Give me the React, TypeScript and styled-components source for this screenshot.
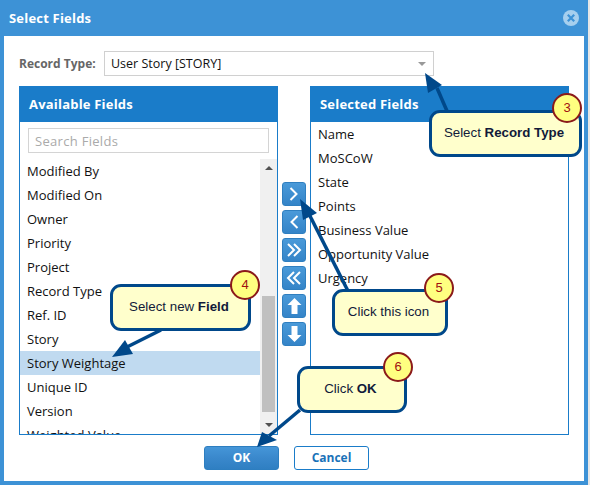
import styled, { createGlobalStyle } from 'styled-components'

const availableFields = [
    'Modified By',
    'Modified On',
    'Owner',
    'Priority',
    'Project',
    'Record Type',
    'Ref. ID',
    'Story',
    'Story Weightage',
    'Unique ID',
    'Version',
    'Weighted Value',
]

const selectedFields = ['Name', 'MoSCoW', 'State', 'Points', 'Business Value', 'Opportunity Value', 'Urgency']

const moveIcons = [
    <polyline key="r" points="8.5,6 14.5,12 8.5,18" />,
    <polyline key="l" points="15.5,6 9.5,12 15.5,18" />,
    <g key="rr">
        <polyline points="6,6 12,12 6,18" />
        <polyline points="12,6 18,12 12,18" />
    </g>,
    <g key="ll">
        <polyline points="12,6 6,12 12,18" />
        <polyline points="18,6 12,12 18,18" />
    </g>,
    <polygon key="u" points="12.5,4 19.5,11 15.5,11 15.5,20 9.5,20 9.5,11 5.5,11" fill="#fff" stroke="none" />,
    <polygon key="d" points="12.5,20 19.5,13 15.5,13 15.5,4 9.5,4 9.5,13 5.5,13" fill="#fff" stroke="none" />,
]

const App = () => {
    return (
        <Page>
            <GlobalStyle />
            <Window>
                <TitleBar>
                    Select Fields
                    <CloseIcon viewBox="0 0 16 16">
                        <circle cx="8" cy="8" r="8" fill="#a6cfee" />
                        <path d="M4.8 4.8 L11.2 11.2 M11.2 4.8 L4.8 11.2" stroke="#3d92d6" strokeWidth="2.2" />
                    </CloseIcon>
                </TitleBar>
                <Content>
                    <RecordRow>
                        <RecordLabel>Record Type:</RecordLabel>
                        <RecordSelect>
                            User Story [STORY]
                            <SelectCaret />
                        </RecordSelect>
                    </RecordRow>
                    <Columns>
                        <Panel>
                            <PanelHeader>Available Fields</PanelHeader>
                            <SearchWrap>
                                <SearchBox>Search Fields</SearchBox>
                            </SearchWrap>
                            <ListArea>
                                <FieldList>
                                    {availableFields.map((f) => (
                                        <FieldRow key={f} $selected={f === 'Story Weightage'}>{f}</FieldRow>
                                    ))}
                                </FieldList>
                                <ScrollTrack>
                                    <ScrollUp />
                                    <ScrollThumb />
                                    <ScrollDown />
                                </ScrollTrack>
                            </ListArea>
                        </Panel>
                        <MoveButtons>
                            {moveIcons.map((icon, i) => (
                                <MoveButton key={i}>
                                    <svg width="24" height="24" viewBox="0 0 24 24" fill="none" stroke="#fff" strokeWidth="2">
                                        {icon}
                                    </svg>
                                </MoveButton>
                            ))}
                        </MoveButtons>
                        <Panel>
                            <PanelHeader>Selected Fields</PanelHeader>
                            <FieldList>
                                {selectedFields.map((f) => (
                                    <FieldRow key={f}>{f}</FieldRow>
                                ))}
                            </FieldList>
                        </Panel>
                    </Columns>
                    <Footer>
                        <OkButton>OK</OkButton>
                        <CancelButton>Cancel</CancelButton>
                    </Footer>
                </Content>
            </Window>

            <Arrows width="590" height="485" viewBox="0 0 590 485">
                <g fill="#00488a" stroke="#00488a">
                    <line x1="437" y1="88" x2="447" y2="111" strokeWidth="3.5" />
                    <polygon points="425,73 442,85 428,93" strokeWidth="0" />
                    <line x1="127" y1="347" x2="161" y2="330" strokeWidth="3.5" />
                    <polygon points="112,357 125,340 133,354" strokeWidth="0" />
                    <line x1="309" y1="214" x2="348" y2="291" strokeWidth="3.5" />
                    <polygon points="300,199 317,213 303,220" strokeWidth="0" />
                    <line x1="269" y1="436" x2="300" y2="410" strokeWidth="3.5" />
                    <polygon points="257,447 262,432 277,440" strokeWidth="0" />
                </g>
            </Arrows>

            <Callout $x={429} $y={110} $w={153} $h={47}>
                <span>Select <b>Record Type</b></span>
                <Badge $x={120} $y={-20}>3</Badge>
            </Callout>
            <Callout $x={110} $y={284} $w={141} $h={47}>
                <span>Select new <b>Field</b></span>
                <Badge $x={117} $y={-17}>4</Badge>
            </Callout>
            <Callout $x={332} $y={289} $w={116} $h={47}>
                <span>Click this icon</span>
                <Badge $x={89} $y={-19}>5</Badge>
            </Callout>
            <Callout $x={297} $y={366} $w={110} $h={47}>
                <span>Click <b>OK</b></span>
                <Badge $x={83} $y={-17}>6</Badge>
            </Callout>
        </Page>
    )
}

const GlobalStyle = createGlobalStyle`
    html, body {
        margin: 0;
        padding: 0;
        background: #e6e6e6;
    }
`

const Page = styled.div`
    position: relative;
    width: 590px;
    height: 485px;
    overflow: hidden;
    font-family: 'Open Sans', sans-serif;
`

const Window = styled.div`
    box-sizing: border-box;
    width: 588px;
    height: 485px;
    background: #fff;
    border: 4px solid #3d92d6;
    border-top: 0;
    border-radius: 4px 4px 0 0;
`

const TitleBar = styled.div`
    display: flex;
    align-items: center;
    justify-content: space-between;
    height: 36px;
    margin: 0 -4px;
    padding: 0 9px;
    background: #3d92d6;
    color: #fff;
    font-size: 13px;
    font-weight: 700;
    letter-spacing: 0.2px;
`

const CloseIcon = styled.svg`
    width: 16px;
    height: 16px;
`

const Content = styled.div`
    padding: 15px 15px 0;
`

const RecordRow = styled.div`
    display: flex;
    align-items: center;
    height: 25px;
`

const RecordLabel = styled.div`
    width: 85px;
    color: #666;
    font-size: 12px;
    font-weight: 700;
`

const RecordSelect = styled.div`
    position: relative;
    box-sizing: border-box;
    width: 330px;
    height: 25px;
    padding-left: 6px;
    border: 1px solid #d0d0d0;
    color: #111;
    font-size: 12.5px;
    line-height: 23px;
`

const SelectCaret = styled.div`
    position: absolute;
    top: 10px;
    right: 7px;
    border-left: 4.5px solid transparent;
    border-right: 4.5px solid transparent;
    border-top: 4px solid #999;
`

const Columns = styled.div`
    display: flex;
    margin-top: 10px;
`

const Panel = styled.div`
    display: flex;
    flex-direction: column;
    box-sizing: border-box;
    width: 259px;
    height: 349px;
    border: 1px solid #1a7cc9;
    overflow: hidden;
`

const PanelHeader = styled.div`
    flex: none;
    height: 35px;
    padding-left: 9px;
    background: #1a7cc9;
    color: #fff;
    font-size: 13px;
    font-weight: 700;
    letter-spacing: 0.2px;
    line-height: 35px;
`

const SearchWrap = styled.div`
    flex: none;
    height: 37px;
    padding: 6px 8px 0;
    box-sizing: border-box;
`

const SearchBox = styled.div`
    box-sizing: border-box;
    height: 25px;
    padding-left: 6px;
    border: 1px solid #d4d4d4;
    color: #aaa;
    font-size: 13px;
    letter-spacing: 0.3px;
    line-height: 24px;
`

const ListArea = styled.div`
    display: flex;
    flex: 1;
    min-height: 0;
`

const FieldList = styled.div`
    flex: 1;
    overflow: hidden;
`

const FieldRow = styled.div<{ $selected?: boolean }>`
    height: 24px;
    padding-left: 7px;
    background: ${(p) => (p.$selected ? '#c0daf0' : 'transparent')};
    color: #111;
    font-size: 13px;
    line-height: 25px;
`

const ScrollTrack = styled.div`
    display: flex;
    flex: none;
    flex-direction: column;
    align-items: center;
    width: 17px;
    background: #f0f0f0;
`

const ScrollUp = styled.div`
    margin-top: 7px;
    border-left: 4px solid transparent;
    border-right: 4px solid transparent;
    border-bottom: 4px solid #505050;
`

const ScrollThumb = styled.div`
    width: 13px;
    height: 116px;
    margin-top: 126px;
    background: #c0c0c0;
`

const ScrollDown = styled.div`
    margin-top: 11px;
    border-left: 4px solid transparent;
    border-right: 4px solid transparent;
    border-top: 4px solid #505050;
`

const MoveButtons = styled.div`
    display: flex;
    flex: none;
    flex-direction: column;
    gap: 4px;
    width: 32px;
    padding: 96px 4px 0;
    box-sizing: border-box;
`

const MoveButton = styled.div`
    box-sizing: border-box;
    width: 24px;
    height: 24px;
    background: linear-gradient(#4a9ad9, #3484c8);
    border: 1px solid #2f7fc0;
    border-radius: 3px;
    svg {
        display: block;
        margin: -1px;
    }
`

const Footer = styled.div`
    display: flex;
    gap: 15px;
    margin-top: 11px;
    padding-left: 185px;
`

const OkButton = styled.div`
    box-sizing: border-box;
    width: 75px;
    height: 24px;
    background: linear-gradient(#4596d8, #3a88cc 50%, #2f7fc2);
    border: 1px solid #2d7ec0;
    border-radius: 3px;
    color: #fff;
    font-size: 12px;
    font-weight: 700;
    line-height: 22px;
    text-align: center;
`

const CancelButton = styled.div`
    box-sizing: border-box;
    width: 75px;
    height: 24px;
    background: #fff;
    border: 1px solid #1a7cc9;
    border-radius: 3px;
    color: #1a72b8;
    font-size: 12px;
    font-weight: 700;
    line-height: 22px;
    text-align: center;
`

const Arrows = styled.svg`
    position: absolute;
    top: 0;
    left: 0;
    pointer-events: none;
`

const Callout = styled.div<{ $x: number; $y: number; $w: number; $h: number }>`
    position: absolute;
    top: ${(p) => p.$y}px;
    left: ${(p) => p.$x}px;
    display: flex;
    align-items: center;
    justify-content: center;
    box-sizing: border-box;
    width: ${(p) => p.$w}px;
    height: ${(p) => p.$h}px;
    padding: 0 3px 2px 0;
    background: #ffffcc;
    border: 3px solid #00488a;
    border-radius: 11px;
    color: #111a3a;
    font-family: 'Liberation Sans', Arial, sans-serif;
    font-size: 13.3px;
`

const Badge = styled.div<{ $x: number; $y: number }>`
    position: absolute;
    top: ${(p) => p.$y}px;
    left: ${(p) => p.$x}px;
    box-sizing: border-box;
    width: 30px;
    height: 30px;
    background: #ffff80;
    border: 2px solid #8b1a1a;
    border-radius: 50%;
    color: #a01010;
    font-size: 13px;
    line-height: 26px;
    text-align: center;
`

export default App
